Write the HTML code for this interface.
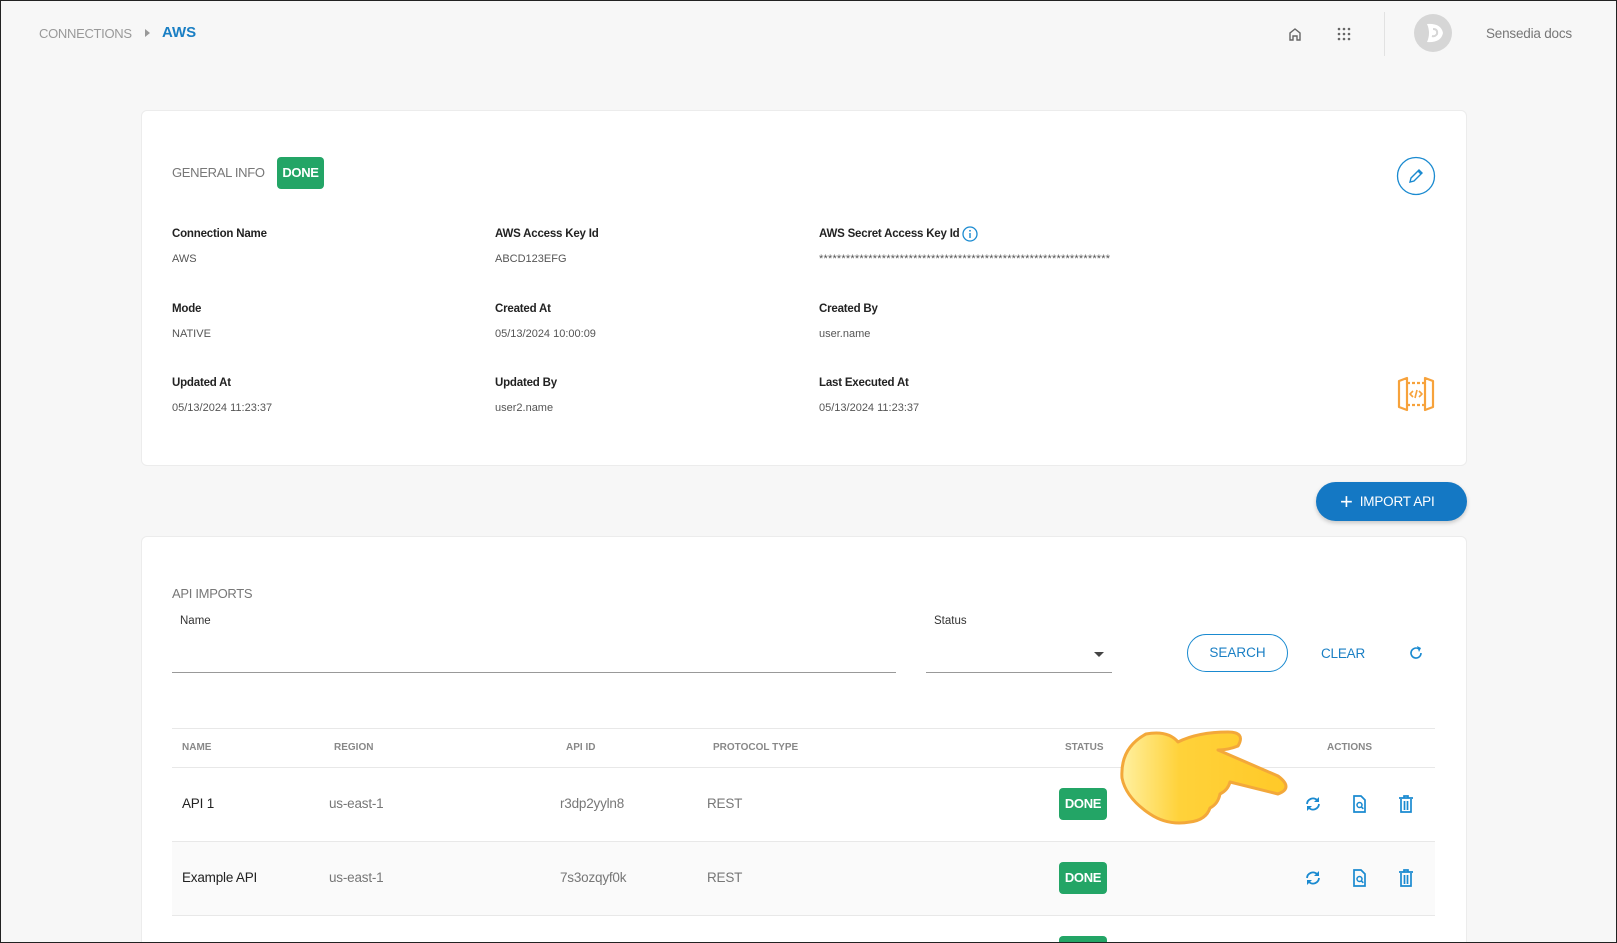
<!DOCTYPE html>
<html><head><meta charset="utf-8"><style>
*{box-sizing:border-box;margin:0;padding:0}
html,body{width:1617px;height:943px;overflow:hidden}
body{background:#f7f7f7;font-family:"Liberation Sans",Arial,sans-serif;position:relative}
.a{position:absolute;white-space:nowrap}
.card{position:absolute;background:#fff;border:1px solid #ececec;border-radius:6px}
.lbl{font-size:11.5px;font-weight:bold;color:#222;letter-spacing:-0.2px}
.val{font-size:11px;color:#555}
.badge{position:absolute;background:#23a566;color:#fff;font-weight:bold;border-radius:4px;font-size:13px;text-align:center;letter-spacing:-0.3px}
.th{font-size:10px;font-weight:bold;color:#888;top:742px}
.td{font-size:13.5px;color:#777;letter-spacing:-0.2px}
.line{position:absolute;left:172px;width:1263px;height:1px;background:#e8e8e8}
.frame{position:absolute;left:0;top:0;width:1617px;height:943px;border:1px solid #222;pointer-events:none;z-index:10}
</style></head><body>
<div class="frame"></div>
<div class="a" style="left:39px;top:26px;font-size:13px;color:#999;letter-spacing:-0.3px">CONNECTIONS</div>
<div class="a" style="left:145px;top:29px;width:0;height:0;border-left:5px solid #999;border-top:4px solid transparent;border-bottom:4px solid transparent"></div>
<div class="a" style="left:162px;top:24px;font-size:15px;color:#1a7fc4;font-weight:bold">AWS</div>
<svg class="a" style="left:1287px;top:26px" width="16" height="16" viewBox="0 0 16 16"><path d="M3 14V7L8 3l5 4v7h-3v-4H6v4z" fill="none" stroke="#666" stroke-width="1.4"/></svg>
<svg class="a" style="left:1337px;top:27px" width="14" height="14"><g fill="#666"><circle cx="2" cy="2" r="1.3"/><circle cx="7" cy="2" r="1.3"/><circle cx="12" cy="2" r="1.3"/><circle cx="2" cy="7" r="1.3"/><circle cx="7" cy="7" r="1.3"/><circle cx="12" cy="7" r="1.3"/><circle cx="2" cy="12" r="1.3"/><circle cx="7" cy="12" r="1.3"/><circle cx="12" cy="12" r="1.3"/></g></svg>
<div class="a" style="left:1384px;top:12px;width:1px;height:44px;background:#e2e2e2"></div>
<svg class="a" style="left:1413px;top:13px" width="40" height="40"><circle cx="20" cy="20" r="19" fill="#d6d6d6"/><path d="M14 11 Q28 10 30 20 Q28 30 14 29 Q18 20 14 11z" fill="#fff"/><path d="M20 16q5 0 4 5q-2 3 -5 2" fill="none" stroke="#d6d6d6" stroke-width="2"/></svg>
<div class="a" style="left:1486px;top:26px;font-size:13.5px;color:#777;letter-spacing:-0.2px">Sensedia docs</div>

<div class="card" style="left:141px;top:110px;width:1326px;height:356px"></div>
<div class="a" style="left:172px;top:165px;font-size:13px;color:#777;letter-spacing:-0.3px">GENERAL INFO</div>
<div class="badge" style="left:277px;top:157px;width:47px;height:32px;line-height:32px">DONE</div>
<svg class="a" style="left:1396px;top:156px" width="40" height="40"><circle cx="20" cy="20" r="18.5" fill="none" stroke="#1a8ad0" stroke-width="1.3"/><path d="M14 26l1-4 8-8 3 3-8 8z M22 15l3 3" fill="none" stroke="#1a8ad0" stroke-width="1.4"/></svg>

<div class="a lbl" style="left:172px;top:228px">Connection Name</div><div class="a val" style="left:172px;top:253px">AWS</div>
<div class="a lbl" style="left:495px;top:228px">AWS Access Key Id</div><div class="a val" style="left:495px;top:253px">ABCD123EFG</div>
<div class="a lbl" style="left:819px;top:228px">AWS Secret Access Key Id</div>
<svg class="a" style="left:962px;top:226px" width="16" height="16"><circle cx="8" cy="8" r="7" fill="#fff" stroke="#1a8ad0" stroke-width="1.3"/><rect x="7.3" y="7" width="1.4" height="5" fill="#1a8ad0"/><circle cx="8" cy="4.8" r="0.9" fill="#1a8ad0"/></svg>
<div class="a val" style="left:819px;top:253px;letter-spacing:0.2px">*****************************************************************</div>
<div class="a lbl" style="left:172px;top:303px">Mode</div><div class="a val" style="left:172px;top:328px">NATIVE</div>
<div class="a lbl" style="left:495px;top:303px">Created At</div><div class="a val" style="left:495px;top:328px">05/13/2024 10:00:09</div>
<div class="a lbl" style="left:819px;top:303px">Created By</div><div class="a val" style="left:819px;top:328px">user.name</div>
<div class="a lbl" style="left:172px;top:377px">Updated At</div><div class="a val" style="left:172px;top:402px">05/13/2024 11:23:37</div>
<div class="a lbl" style="left:495px;top:377px">Updated By</div><div class="a val" style="left:495px;top:402px">user2.name</div>
<div class="a lbl" style="left:819px;top:377px">Last Executed At</div><div class="a val" style="left:819px;top:402px">05/13/2024 11:23:37</div>
<svg class="a" style="left:1396px;top:375px" width="40" height="38" viewBox="0 0 40 38"><g fill="none" stroke="#f7a23b" stroke-width="2.2" stroke-linejoin="round"><path d="M3 6l8-3v32l-8-3z M37 6l-8-3v32l8-3z"/><path d="M11 8h18 M11 30h18" stroke-dasharray="3 2"/><path d="M17 16l-3 3 3 3 M23 16l3 3-3 3 M21 15l-2 8" stroke-width="1.6"/></g></svg>

<div class="a" style="left:1316px;top:482px;width:151px;height:39px;border-radius:20px;background:#1478c4;box-shadow:0 2px 4px rgba(0,0,0,.2);color:#fff;font-size:13.5px;line-height:39px;padding-left:24px;letter-spacing:-0.2px"><span style="font-size:22px;vertical-align:-3px;font-weight:300">+</span>&nbsp; IMPORT API</div>

<div class="card" style="left:141px;top:536px;width:1326px;height:420px"></div>
<div class="a" style="left:172px;top:586px;font-size:13px;color:#777;letter-spacing:-0.3px">API IMPORTS</div>
<div class="a" style="left:180px;top:615px;font-size:11.5px;color:#333">Name</div>
<div class="a" style="left:172px;top:672px;width:724px;height:1px;background:#999"></div>
<div class="a" style="left:934px;top:615px;font-size:11.5px;color:#333">Status</div>
<div class="a" style="left:926px;top:672px;width:186px;height:1px;background:#999"></div>
<div class="a" style="left:1094px;top:652px;border-top:5px solid #444;border-left:5px solid transparent;border-right:5px solid transparent"></div>
<div class="a" style="left:1187px;top:634px;width:101px;height:38px;border:1.3px solid #1a8ad0;border-radius:19px;color:#1a7fc4;font-size:13.5px;text-align:center;line-height:36px">SEARCH</div>
<div class="a" style="left:1321px;top:646px;color:#1a7fc4;font-size:13.5px;letter-spacing:-0.2px">CLEAR</div>
<svg class="a" style="left:1408px;top:645px" width="16" height="16"><path d="M13 8A5 5 0 1 1 10.5 3.7" fill="none" stroke="#1a8ad0" stroke-width="1.6"/><path d="M9 1l4 2-2 4z" fill="#1a8ad0"/></svg>

<div class="line" style="top:728px"></div>
<div class="a th" style="left:182px">NAME</div>
<div class="a th" style="left:334px">REGION</div>
<div class="a th" style="left:566px">API ID</div>
<div class="a th" style="left:713px">PROTOCOL TYPE</div>
<div class="a th" style="left:1065px">STATUS</div>
<div class="a th" style="left:1327px">ACTIONS</div>
<div class="line" style="top:767px"></div>
<div class="a" style="left:172px;top:842px;width:1263px;height:73px;background:#fafafa"></div>
<div class="line" style="top:841px"></div>
<div class="line" style="top:915px"></div>

<div class="a td" style="left:182px;top:796px;color:#222">API 1</div>
<div class="a td" style="left:329px;top:796px">us-east-1</div>
<div class="a td" style="left:560px;top:796px">r3dp2yyln8</div>
<div class="a td" style="left:707px;top:796px">REST</div>
<div class="badge" style="left:1059px;top:788px;width:48px;height:32px;line-height:32px">DONE</div>

<div class="a td" style="left:182px;top:870px;color:#222">Example API</div>
<div class="a td" style="left:329px;top:870px">us-east-1</div>
<div class="a td" style="left:560px;top:870px">7s3ozqyf0k</div>
<div class="a td" style="left:707px;top:870px">REST</div>
<div class="badge" style="left:1059px;top:862px;width:48px;height:32px;line-height:32px">DONE</div>
<div class="badge" style="left:1059px;top:936px;width:48px;height:10px"></div>

<svg width="0" height="0" style="position:absolute"><defs>
<g id="r"><path d="M3 9a6 6 0 0 1 10-4" fill="none" stroke="#1a8ad0" stroke-width="1.8"/><path d="M15 2v5h-5z" fill="#1a8ad0"/><path d="M15 9a6 6 0 0 1-10 4" fill="none" stroke="#1a8ad0" stroke-width="1.8"/><path d="M3 16v-5h5z" fill="#1a8ad0"/></g>
<g id="d"><path d="M3 1h7l4 4v12H3z" fill="none" stroke="#1a8ad0" stroke-width="1.7"/><circle cx="8.5" cy="10" r="2.5" fill="none" stroke="#1a8ad0" stroke-width="1.5"/><path d="M10.3 11.8l2 2" stroke="#1a8ad0" stroke-width="1.6"/></g>
<g id="t"><path d="M1 3h14M6 3V1h4v2M3 4v13h10V4M6.5 6v9M9.5 6v9" fill="none" stroke="#1a8ad0" stroke-width="1.7"/></g>
</defs></svg>
<svg class="a" style="left:1304px;top:795px" width="18" height="18"><use href="#r"/></svg>
<svg class="a" style="left:1351px;top:795px" width="18" height="18"><use href="#d"/></svg>
<svg class="a" style="left:1398px;top:795px" width="18" height="18"><use href="#t"/></svg>
<svg class="a" style="left:1304px;top:869px" width="18" height="18"><use href="#r"/></svg>
<svg class="a" style="left:1351px;top:869px" width="18" height="18"><use href="#d"/></svg>
<svg class="a" style="left:1398px;top:869px" width="18" height="18"><use href="#t"/></svg>

<svg class="a" style="left:1118px;top:728px" width="180" height="100" viewBox="0 0 180 100">
<defs><linearGradient id="hg" x1="0" x2="1"><stop offset="0" stop-color="#fff0a0"/><stop offset=".35" stop-color="#ffd23a"/><stop offset="1" stop-color="#ffc928"/></linearGradient></defs>
<path d="M28 6 Q50 2 60 14 Q80 4 110 4 Q128 4 120 18 Q110 22 100 22 L160 48 Q176 60 160 66 L112 54 Q110 62 102 66 Q100 76 92 80 Q88 92 72 94 Q50 98 32 86 Q8 70 4 50 Q2 20 28 6z" fill="url(#hg)" stroke="#f3a83a" stroke-width="3" stroke-linejoin="round"/>
</svg>
</body></html>
